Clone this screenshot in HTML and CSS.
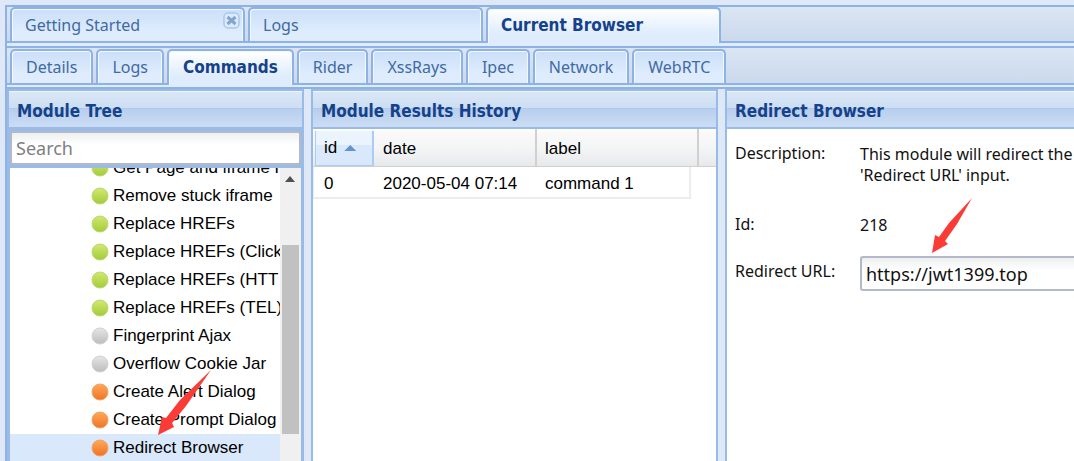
FILE: index.html
```html
<!DOCTYPE html>
<html lang="en">
<head>
<meta charset="utf-8">
<title>Current Browser</title>
<link rel="stylesheet" href="styles.css">
</head>
<body>
<svg class="defs" width="0" height="0" aria-hidden="true">
  <defs>
    <linearGradient id="g-green" x1="0" y1="0" x2="0" y2="1"><stop offset="0" stop-color="#d3e873"/><stop offset="1" stop-color="#a3cb38"/></linearGradient>
    <linearGradient id="g-grey" x1="0" y1="0" x2="0" y2="1"><stop offset="0" stop-color="#e6e6e6"/><stop offset="1" stop-color="#bcbcbc"/></linearGradient>
    <linearGradient id="g-orange" x1="0" y1="0" x2="0" y2="1"><stop offset="0" stop-color="#ffa95a"/><stop offset="1" stop-color="#ee7424"/></linearGradient>
  </defs>
</svg>
<div class="app">
  <nav class="tabs main-tabs">
    <button class="tab">Getting Started
      <svg class="close" viewBox="0 0 17 17"><rect x="1" y="1" width="15" height="15" rx="4" fill="#dcebfc" stroke="#a9c8ec" stroke-width="1.5"/><path d="M4.5 5 12.5 12M12.5 5 4.5 12" stroke="#83a4cf" stroke-width="3"/></svg>
    </button>
    <button class="tab">Logs</button>
    <button class="tab active">Current Browser</button>
  </nav>
  <div class="tab-gap"></div>
  <nav class="tabs sub-tabs">
    <button class="tab">Details</button>
    <button class="tab">Logs</button>
    <button class="tab active">Commands</button>
    <button class="tab">Rider</button>
    <button class="tab">XssRays</button>
    <button class="tab">Ipec</button>
    <button class="tab">Network</button>
    <button class="tab">WebRTC</button>
  </nav>
  <div class="tab-gap sub-gap"></div>
  <main class="panels">
    <section class="panel tree-panel">
      <h2 class="head">Module Tree</h2>
      <input class="search" type="text" placeholder="Search" aria-label="Search">
      <div class="tree">
        <ul class="nodes">
          <li><svg class="dot" viewBox="0 0 18 18"><circle cx="9" cy="9" r="8" fill="url(#g-green)" stroke="#bcd86c"/></svg>Get Page and iframe H</li>
          <li><svg class="dot" viewBox="0 0 18 18"><circle cx="9" cy="9" r="8" fill="url(#g-green)" stroke="#bcd86c"/></svg>Remove stuck iframe</li>
          <li><svg class="dot" viewBox="0 0 18 18"><circle cx="9" cy="9" r="8" fill="url(#g-green)" stroke="#bcd86c"/></svg>Replace HREFs</li>
          <li><svg class="dot" viewBox="0 0 18 18"><circle cx="9" cy="9" r="8" fill="url(#g-green)" stroke="#bcd86c"/></svg>Replace HREFs (Click</li>
          <li><svg class="dot" viewBox="0 0 18 18"><circle cx="9" cy="9" r="8" fill="url(#g-green)" stroke="#bcd86c"/></svg>Replace HREFs (HTT</li>
          <li><svg class="dot" viewBox="0 0 18 18"><circle cx="9" cy="9" r="8" fill="url(#g-green)" stroke="#bcd86c"/></svg>Replace HREFs (TEL)</li>
          <li><svg class="dot" viewBox="0 0 18 18"><circle cx="9" cy="9" r="8" fill="url(#g-grey)" stroke="#d2d2d2"/></svg>Fingerprint Ajax</li>
          <li><svg class="dot" viewBox="0 0 18 18"><circle cx="9" cy="9" r="8" fill="url(#g-grey)" stroke="#d2d2d2"/></svg>Overflow Cookie Jar</li>
          <li><svg class="dot" viewBox="0 0 18 18"><circle cx="9" cy="9" r="8" fill="url(#g-orange)" stroke="#f5a163"/></svg>Create Alert Dialog</li>
          <li><svg class="dot" viewBox="0 0 18 18"><circle cx="9" cy="9" r="8" fill="url(#g-orange)" stroke="#f5a163"/></svg>Create Prompt Dialog</li>
          <li class="selected"><svg class="dot" viewBox="0 0 18 18"><circle cx="9" cy="9" r="8" fill="url(#g-orange)" stroke="#f5a163"/></svg>Redirect Browser</li>
        </ul>
        <div class="scrollbar"><i class="up"></i><i class="thumb"></i></div>
      </div>
    </section>
    <section class="panel results">
      <h2 class="head">Module Results History</h2>
      <table class="grid">
        <thead><tr><th class="c-id"><span class="sorted">id<i class="asc"></i></span></th><th class="c-col">date</th><th class="c-col">label</th><th class="c-rest"></th></tr></thead>
        <tbody><tr><td>0</td><td>2020-05-04 07:14</td><td><div class="last">command 1</div></td></tr></tbody>
      </table>
    </section>
    <section class="panel detail">
      <h2 class="head">Redirect Browser</h2>
      <form class="form">
        <span class="name">Description:</span><p class="value">This module will redirect the<br>'Redirect URL' input.</p>
        <span class="name">Id:</span><p class="value">218</p>
        <label class="name url-name" for="url">Redirect URL:</label><input class="url" id="url" type="text" value="https://jwt1399.top">
      </form>
    </section>
  </main>
  <svg class="arrow arrow-tree" viewBox="0 0 56 67"><path d="M54 1 29 37 15 54 17 58 1 66 5 48 9 49 23 31Z" fill="#fb3b36"/></svg>
  <svg class="arrow arrow-url" viewBox="0 0 44 57"><path d="M42 0 27 26 15 43 18 46 2 55 5 37 9 39 19 25Z" fill="#fb3b36"/></svg>
</div>
</body>
</html>
```
FILE: styles.css
```css
* { box-sizing: border-box; }
body {
  margin: 0;
  background: #dfe8f6;
  font: 16px/20px "Noto Sans", "Open Sans", sans-serif;
  color: #111;
}
button, input { font: inherit; color: inherit; }
h2, p, ul { margin: 0; padding: 0; }
.defs { position: absolute; }
.app {
  position: relative;
  display: flex;
  flex-direction: column;
  height: 100vh;
  padding: 5px 0 0 5px;
  overflow: hidden;
}
.tabs {
  display: flex;
  align-items: flex-end;
  gap: 3px;
  height: 38px;
  flex: none;
  padding: 1px 3px 0;
  border: solid #8db2e3;
  border-width: 2px 0 2px 2px;
  background: linear-gradient(#dbe6f4, #cad9ec);
}
.sub-tabs { height: 39px; }
.tab {
  display: flex;
  align-items: center;
  position: relative;
  height: 34px;
  padding: 0 14px;
  border: 2px solid #8db2e3;
  border-bottom: 0;
  border-radius: 5px 5px 0 0;
  background: linear-gradient(#cbdff8, #deecfd 70%);
  box-shadow: inset 1px 1px 0 #f2f8ff, inset -1px 0 0 #f2f8ff;
  color: #416aa3;
  white-space: nowrap;
}
.main-tabs .tab { width: 235px; padding: 0 13px; }
.tab.active, .head {
  color: #15428b;
  font-family: "DejaVu Sans Condensed", "DejaVu Sans", sans-serif;
  font-size: 17px;
  font-stretch: condensed;
  font-weight: bold;
}
.tab.active {
  height: 36px;
  margin-bottom: -2px;
  padding-bottom: 2px;
  background: linear-gradient(#fff, #deecfd 75%);
}
.close { position: absolute; top: 3px; right: 3px; width: 17px; height: 17px; }
.tab-gap {
  height: 3px;
  flex: none;
  border-left: 2px solid #8db2e3;
  background: #deecfd;
}
.sub-gap { height: 4px; border-bottom: 2px solid #8db2e3; }
.panels { display: flex; gap: 7px; flex: 1; min-height: 0; border-left: 2px solid #8db2e3; }
.panel { display: flex; flex-direction: column; border: 2px solid #99bbe8; border-bottom: 0; background: #fff; min-width: 0; }
.head {
  flex: none;
  height: 38px;
  padding: 0 8px;
  border-top: 1px solid #eef5fd;
  border-bottom: 2px solid #99bbe8;
  background: linear-gradient(#dae7f6, #cddef3 45%, #abc7ec 46%, #b8cfee 50%, #cbddf3);
  line-height: 39px;
  white-space: nowrap;
}
.tree-panel { width: 297px; flex: none; background: #99bbe8; }
.search {
  flex: none;
  height: 34px;
  margin: 2px 1px 3px;
  padding: 0 4px;
  border: 2px solid #b5b8c8;
  border-radius: 3px;
  background: linear-gradient(#eef0f0, #fff 40%);
  font-size: 18px;
}
.search::placeholder { color: #808080; opacity: 1; }
.tree { display: flex; flex: 1; min-height: 0; margin: 0 1px; background: #fff; overflow: hidden; }
.nodes {
  flex: 1;
  min-width: 0;
  margin-top: -14px;
  list-style: none;
  overflow: hidden;
  font-family: "Liberation Sans", Arial, sans-serif;
  font-size: 17px;
  color: #000;
}
.nodes li { display: flex; align-items: center; gap: 4px; height: 28px; padding-left: 81px; white-space: nowrap; }
.nodes .selected { background: #d9e8fb; }
.dot { width: 18px; height: 18px; flex: none; }
.scrollbar { display: flex; flex-direction: column; width: 21px; flex: none; padding: 8px 2px 27px; background: #f0f0f0; }
.up { width: 10px; height: 6px; margin: 0 3px 63px; background: #505050; clip-path: polygon(50% 0, 100% 100%, 0 100%); }
.thumb { flex: 1; background: #c1c1c1; }
.results { width: 407px; flex: none; }
.grid {
  width: 100%;
  table-layout: fixed;
  border-spacing: 0;
  font-family: "Liberation Sans", Arial, sans-serif;
  font-size: 17px;
  color: #000;
}
.grid thead tr { background: linear-gradient(#fff, #f9f9f9 10%, #f4f5f5 50%, #e6e8ea); }
.grid th { height: 38px; padding: 2px 8px 0; border-bottom: 1px solid #d0d0d0; border-right: 2px solid #d0d0d0; font-weight: normal; text-align: left; }
.grid .c-id { width: 62px; padding: 2px 1px 0 2px; border-right: 0; }
.c-col { width: 162px; }
.grid .c-rest { border-right: 0; }
.sorted {
  display: flex;
  align-items: center;
  gap: 7px;
  height: 35px;
  padding: 0 8px;
  border: solid #aaccf6;
  border-width: 0 2px 1px 1px;
  background: linear-gradient(#ebf3fd 40%, #d9e8fb 41%);
}
.asc { width: 12px; height: 6px; background: #6593cf; clip-path: polygon(50% 0, 100% 100%, 0 100%); }
.grid td { height: 32px; padding: 3px 8px 0; border-bottom: 2px solid #ededed; }
.grid td:first-child { padding-left: 10px; border-left: 1px solid #ededed; }
.grid td:last-child { padding: 0 8px 0 0; border-bottom: 0; }
.last { height: 32px; padding: 2px 0 0 8px; line-height: 30px; border: solid #ededed; border-width: 0 2px 2px 0; }
.detail { flex: 1; border-right: 0; overflow: hidden; }
.form {
  display: grid;
  grid-template-columns: 125px 1fr;
  align-items: start;
  padding: 14px 0 0 8px;
  line-height: 21px;
  white-space: nowrap;
}
.value { margin-bottom: 28px; padding-top: 1px; }
.value + .name + .value { margin-bottom: 20px; }
.url-name { padding-top: 5px; }
.url {
  width: 100%;
  height: 35px;
  padding: 0 4px;
  border: 2px solid #b5b8c8;
  border-right: 0;
  border-radius: 3px 0 0 3px;
  background: linear-gradient(#eef0f0, #fff 40%);
  font-size: 18px;
}
.arrow { position: absolute; }
.arrow-tree { left: 157px; top: 369px; width: 56px; height: 67px; }
.arrow-url { left: 930px; top: 198px; width: 44px; height: 57px; }
```
